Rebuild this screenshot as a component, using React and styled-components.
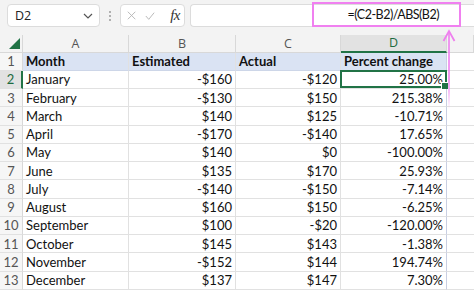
import React from "react";
import styled, { createGlobalStyle } from "styled-components";

const rows = [
  ["January", "-$160", "-$120", "25.00%"],
  ["February", "-$130", "$150", "215.38%"],
  ["March", "$140", "$125", "-10.71%"],
  ["April", "-$170", "-$140", "17.65%"],
  ["May", "$140", "$0", "-100.00%"],
  ["June", "$135", "$170", "25.93%"],
  ["July", "-$140", "-$150", "-7.14%"],
  ["August", "$160", "$150", "-6.25%"],
  ["September", "$100", "-$20", "-120.00%"],
  ["October", "$145", "$143", "-1.38%"],
  ["November", "-$152", "$144", "194.74%"],
  ["December", "$137", "$147", "7.30%"],
];

const GlobalStyle = createGlobalStyle`
  html, body {
    margin: 0;
    padding: 0;
    background: #ffffff;
    overflow: hidden;
  }
  * { box-sizing: border-box; }
`;

const Page = styled.div`
  position: relative;
  width: 474px;
  height: 290px;
  overflow: hidden;
  background: #fff;
`;

const Toolbar = styled.div`
  height: 35px;
  background: #f3f3f3;
  display: flex;
  align-items: center;
  padding: 0 0 4px 7px;
`;

const NameBox = styled.div`
  width: 93px;
  height: 23px;
  background: #fff;
  border: 1px solid #dcdcdc;
  border-radius: 4px;
  display: flex;
  align-items: center;
  justify-content: space-between;
  padding: 0 6px 0 7px;
  font-family: "Open Sans", sans-serif;
  font-size: 12.5px;
  color: #222;
`;

const Dots = styled.div`
  width: 20px;
  display: flex;
  flex-direction: column;
  align-items: center;
  gap: 2px;
  span {
    width: 2px;
    height: 2px;
    border-radius: 50%;
    background: #9a9a9a;
  }
`;

const FxBox = styled.div`
  width: 65px;
  height: 23px;
  background: #fff;
  border: 1px solid #dcdcdc;
  border-radius: 4px;
  display: flex;
  align-items: center;
  padding: 0 4px 0 6px;
  gap: 9px;
`;

const Fx = styled.span`
  margin-left: 6px;
  font-family: "Liberation Serif", serif;
  font-style: italic;
  font-size: 15px;
  color: #333;
  letter-spacing: -0.5px;
`;

const FormulaInput = styled.div`
  flex: 1;
  height: 23px;
  margin-left: 5px;
  background: #fff;
  border: 1px solid #dcdcdc;
  border-right: none;
  border-radius: 4px 0 0 4px;
  display: flex;
  justify-content: flex-end;
  align-items: center;
  padding-right: 13px;
`;

const Callout = styled.div`
  width: 149px;
  height: 25px;
  margin-top: -2px;
  border: 2px solid #f080f0;
  display: flex;
  align-items: center;
  justify-content: flex-end;
  padding-right: 20px;
  font-family: "Lato", sans-serif;
  font-size: 12.5px;
  letter-spacing: -0.5px;
  color: #111;
`;

const Sheet = styled.div`
  display: grid;
  grid-template-columns: 23px 106px 107px 105px 106px 1fr;
  grid-template-rows: 17.5px repeat(13, 18.25px);
`;

const Corner = styled.div`
  background: #f3f3f3;
  border-right: 1px solid #d8d8d8;
  border-bottom: 1px solid #d8d8d8;
  display: flex;
  align-items: flex-end;
  justify-content: flex-end;
  padding: 0 2px 3px 0;
`;

const ColHead = styled.div`
  background: ${(p) => (p.$active ? "#e2e2e2" : "#f3f3f3")};
  border-right: 1px solid #d8d8d8;
  border-bottom: ${(p) => (p.$active ? "2px solid #217346" : "1px solid #d8d8d8")};
  display: flex;
  align-items: center;
  justify-content: center;
  font-family: "Open Sans", sans-serif;
  font-size: 12.5px;
  color: ${(p) => (p.$active ? "#1d6b40" : "#555")};
`;

const RowHead = styled.div`
  background: ${(p) => (p.$active ? "#e2e2e2" : "#f6f6f6")};
  border-right: ${(p) => (p.$active ? "2px solid #217346" : "1px solid #d8d8d8")};
  border-bottom: 1px solid #e1e1e1;
  display: flex;
  align-items: center;
  justify-content: center;
  font-family: "Lato", sans-serif;
  font-size: 13px;
  color: ${(p) => (p.$active ? "#1d6b40" : "#555")};
`;

const Cell = styled.div`
  position: relative;
  background: ${(p) => (p.$head ? "#dae3f3" : "#fff")};
  border-right: 1px solid ${(p) => (p.$edge ? "#c9cfe2" : "#e1e1e1")};
  border-bottom: 1px solid ${(p) => (p.$head ? "#cdd6e8" : "#e1e1e1")};
  display: flex;
  align-items: center;
  justify-content: ${(p) => (p.$right ? "flex-end" : "flex-start")};
  padding: 0 3px;
  font-family: "Lato", sans-serif;
  font-size: 13px;
  font-weight: ${(p) => (p.$head ? 700 : 400)};
  color: #111;
  white-space: nowrap;
  overflow: visible;
`;

const Selection = styled.div`
  position: absolute;
  inset: -1px -1px 0 -1px;
  border: 2px solid #217346;
  pointer-events: none;
  &::after {
    content: "";
    position: absolute;
    right: -4px;
    bottom: -4px;
    width: 6px;
    height: 6px;
    background: #217346;
    border: 1px solid #fff;
  }
`;

const Empty = styled.div`
  border-bottom: 1px solid #e1e1e1;
  background: #fff;
`;

const Arrow = styled.svg`
  position: absolute;
  left: 442px;
  top: 29px;
`;

function Chevron() {
  return (
    <svg width="10" height="6" viewBox="0 0 10 6">
      <path d="M1 1 L5 5 L9 1" fill="none" stroke="#555" strokeWidth="1.2" />
    </svg>
  );
}

function Cross() {
  return (
    <svg width="11" height="11" viewBox="0 0 11 11">
      <path d="M1 1 L10 10 M10 1 L1 10" stroke="#b4b4b4" strokeWidth="1.1" />
    </svg>
  );
}

function Check() {
  return (
    <svg width="12" height="10" viewBox="0 0 12 10">
      <path d="M1 5 L4.5 9 L11 1" fill="none" stroke="#b4b4b4" strokeWidth="1.1" />
    </svg>
  );
}

export default function App() {
  return (
    <Page>
      <GlobalStyle />
      <Toolbar>
        <NameBox>
          D2
          <Chevron />
        </NameBox>
        <Dots>
          <span />
          <span />
          <span />
        </Dots>
        <FxBox>
          <Cross />
          <Check />
          <Fx>fx</Fx>
        </FxBox>
        <FormulaInput>
          <Callout>=(C2-B2)/ABS(B2)</Callout>
        </FormulaInput>
      </Toolbar>
      <Sheet>
        <Corner>
          <svg width="11" height="11" viewBox="0 0 11 11">
            <path d="M11 0 L11 11 L0 11 Z" fill="#217346" />
          </svg>
        </Corner>
        <ColHead>A</ColHead>
        <ColHead>B</ColHead>
        <ColHead>C</ColHead>
        <ColHead $active>D</ColHead>
        <ColHead />

        <RowHead>1</RowHead>
        <Cell $head>Month</Cell>
        <Cell $head>Estimated</Cell>
        <Cell $head>Actual</Cell>
        <Cell $head $edge>Percent change</Cell>
        <Empty />

        {rows.map((r, i) => (
          <React.Fragment key={r[0]}>
            <RowHead $active={i === 0}>{i + 2}</RowHead>
            <Cell>{r[0]}</Cell>
            <Cell $right>{r[1]}</Cell>
            <Cell $right>{r[2]}</Cell>
            <Cell $right $edge>
              {r[3]}
              {i === 0 && <Selection />}
            </Cell>
            <Empty />
          </React.Fragment>
        ))}
      </Sheet>
      <Arrow width="14" height="80" viewBox="0 0 14 80">
        <defs>
          <linearGradient id="fade" gradientUnits="userSpaceOnUse" x1="0" y1="0" x2="0" y2="80">
            <stop offset="0.65" stopColor="#ee7fee" stopOpacity="1" />
            <stop offset="1" stopColor="#ee7fee" stopOpacity="0" />
          </linearGradient>
        </defs>
        <path d="M7 2 L7 80" stroke="url(#fade)" strokeWidth="1.6" />
        <path d="M1.5 12 L7 2 L12.5 12" fill="none" stroke="#ee7fee" strokeWidth="1.8" />
      </Arrow>
    </Page>
  );
}
